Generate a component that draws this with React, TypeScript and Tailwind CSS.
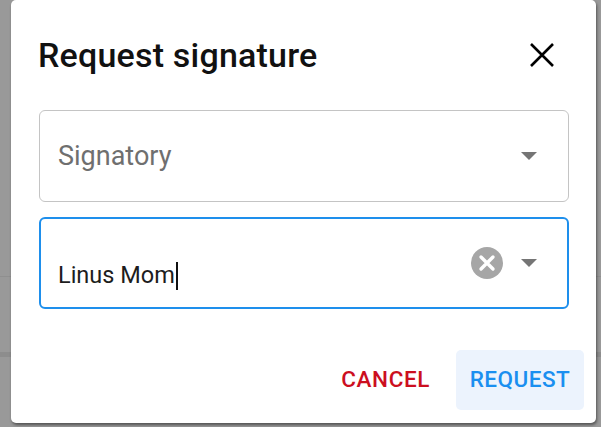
import { useState } from 'react';

// arrow used by both select fields
function DropArrow() {
  return (
    <svg width="16" height="8" viewBox="0 0 16 8" className="shrink-0">
      <path d="M0 0h16L8 8z" fill="#757575" />
    </svg>
  );
}

function ClearIcon() {
  return (
    <svg width="32" height="32" viewBox="0 0 32 32" className="shrink-0">
      <circle cx="16" cy="16" r="16" fill="#a6a6a6" />
      <path d="M10 10l12 12M22 10L10 22" stroke="#fff" strokeWidth="3.4" strokeLinecap="round" />
    </svg>
  );
}

export default function App() {
  const [signer] = useState('Linus Mom');

  return (
    <div
      className="relative w-[601px] h-[427px] overflow-hidden bg-[#999999]"
      style={{ fontFamily: 'Roboto, "Liberation Sans", sans-serif' }}
    >
      {/* page behind the backdrop */}
      <div className="absolute left-0 right-0 top-[276px] h-px bg-[#8f8f8f]" />
      <div className="absolute left-0 right-0 top-[352px] h-[5px] bg-[#8d8d8d]" />

      {/* dialog */}
      <div className="relative z-10 ml-[11px] w-[585px] h-[423px] bg-white rounded-[5px] shadow-[1px_2px_3px_rgba(0,0,0,0.45)] flex flex-col">
        <div className="flex items-center justify-between pl-[27px] pr-[42px] pt-[30px] h-[80px]">
          <h1 className="text-[34px] font-medium text-[#111] leading-none tracking-[0.2px]">
            Request signature
          </h1>
          <svg width="24" height="24" viewBox="0 0 24 24">
            <path d="M1 1l22 22M23 1L1 23" stroke="#000" strokeWidth="2.6" />
          </svg>
        </div>

        <div className="flex flex-col gap-[15px] pl-[28px] pr-[27px] pt-[30px]">
          <div className="h-[92px] border border-[#c4c4c4] rounded-[6px] flex items-center pl-[18px] pr-[31px]">
            <span className="flex-1 text-[27px] text-[#6f6f6f]">Signatory</span>
            <DropArrow />
          </div>

          <div className="h-[92px] border-2 border-[#1e8fec] rounded-[6px] flex items-center pl-[17px] pr-[30px]">
            <div className="flex-1 flex items-center pt-[26px]">
              <span className="text-[23.5px] text-[#1d1d1d]">{signer}</span>
              <span className="ml-[1px] w-[2px] h-[28px] bg-[#111]" />
            </div>
            <div className="mr-[18px]">
              <ClearIcon />
            </div>
            <DropArrow />
          </div>
        </div>

        <div className="mt-auto flex justify-end items-center gap-[12px] pr-[12px] pb-[13px]">
          <button className="h-[60px] px-[14px] rounded-[4px] text-[22.5px] font-medium tracking-[0.6px] text-[#cc0f1f]">
            CANCEL
          </button>
          <button className="h-[60px] w-[128px] rounded-[5px] bg-[#ecf3fd] text-[22.5px] font-medium tracking-[0.5px] text-[#1a8ff0]">
            REQUEST
          </button>
        </div>
      </div>
    </div>
  );
}
